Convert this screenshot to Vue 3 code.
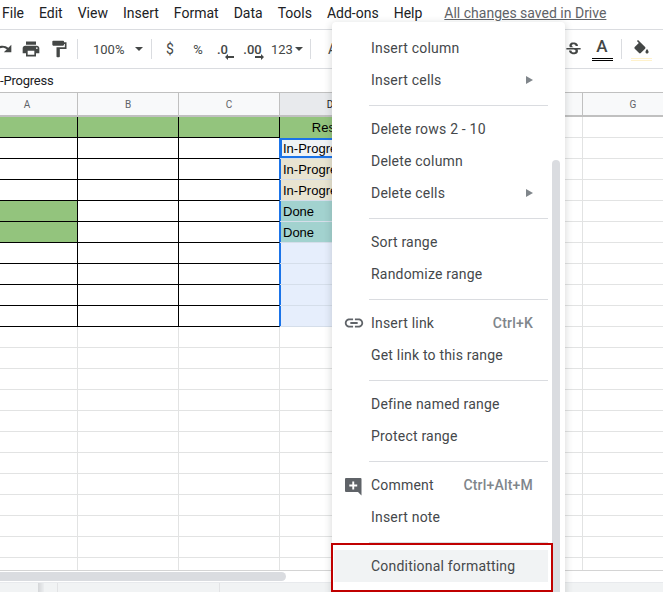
<script setup>
const menus = ['File', 'Edit', 'View', 'Insert', 'Format', 'Data', 'Tools', 'Add-ons', 'Help']
const columns = ['A', 'B', 'C', 'D', 'E', 'F', 'G']

const rows = []
for (let r = 1; r <= 22; r++) {
  const cells = columns.map((c) => ({ key: c, text: '', cls: [] }))
  if (r <= 10) {
    for (let i = 0; i < 3; i++) cells[i].cls.push('boxed')
  }
  if (r === 1) {
    for (let i = 0; i < 3; i++) cells[i].cls.push('green')
    cells[3].cls.push('green', 'head')
    cells[3].text = 'Results'
  }
  if (r === 5 || r === 6) cells[0].cls.push('green')
  if (r >= 2 && r <= 10) {
    cells[2].cls.push('before-sel')
    cells[3].cls.push('sel')
  }
  if (r >= 2 && r <= 4) {
    cells[3].text = 'In-Progress'
    cells[3].cls.push('cream')
  }
  if (r === 5 || r === 6) {
    cells[3].text = 'Done'
    cells[3].cls.push('teal')
  }
  if (r === 2) cells[3].cls.push('active')
  rows.push({ id: r, cells })
}

const sections = [
  [{ label: 'Insert column' }, { label: 'Insert cells', arrow: true }],
  [{ label: 'Delete rows 2 - 10' }, { label: 'Delete column' }, { label: 'Delete cells', arrow: true }],
  [{ label: 'Sort range' }, { label: 'Randomize range' }],
  [{ label: 'Insert link', icon: 'link', keys: 'Ctrl+K' }, { label: 'Get link to this range' }],
  [{ label: 'Define named range' }, { label: 'Protect range' }],
  [{ label: 'Comment', icon: 'comment', keys: 'Ctrl+Alt+M' }, { label: 'Insert note' }],
  [{ label: 'Conditional formatting', hover: true }]
]
</script>

<template>
  <div class="page">
    <div class="menubar">
      <span v-for="m in menus" :key="m" class="menu-name">{{ m }}</span>
      <span class="saved">All changes saved in Drive</span>
    </div>

    <div class="toolbar">
      <span class="tool first">
        <svg width="20" height="20" viewBox="0 0 24 24"><path fill="#444746" d="M18.4 10.6C16.55 8.99 14.15 8 11.5 8c-4.65 0-8.58 3.03-9.96 7.22L3.9 16c1.05-3.19 4.05-5.5 7.6-5.5 1.95 0 3.73.72 5.12 1.88L13 16h9V7l-3.6 3.6z"/></svg>
      </span>
      <span class="tool">
        <svg width="20" height="20" viewBox="0 0 24 24"><path fill="#444746" d="M19 8H5c-1.66 0-3 1.34-3 3v6h4v4h12v-4h4v-6c0-1.66-1.34-3-3-3zm-3 11H8v-5h8v5zm3-7c-.55 0-1-.45-1-1s.45-1 1-1 1 .45 1 1-.45 1-1 1zm-1-9H6v4h12V3z"/></svg>
      </span>
      <span class="tool">
        <svg width="20" height="20" viewBox="0 0 24 24"><path fill="#444746" d="M18 4V3c0-.55-.45-1-1-1H5c-.55 0-1 .45-1 1v4c0 .55.45 1 1 1h12c.55 0 1-.45 1-1V6h1v4H9v11c0 .55.45 1 1 1h2c.55 0 1-.45 1-1v-9h8V4h-3z"/></svg>
      </span>
      <span class="divider d1"></span>
      <span class="zoom-box"><span class="zoom-val">100%</span><span class="caret"></span></span>
      <span class="divider"></span>
      <span class="tool txt dollar">$</span>
      <span class="tool txt percent">%</span>
      <span class="tool txt dec">
        <span>.0</span>
        <svg class="dec-arrow" width="9" height="6" viewBox="0 0 9 6"><path fill="#444746" d="M3 0v2h6v2H3v2L0 3z"/></svg>
      </span>
      <span class="tool txt dec dec2">
        <span>.00</span>
        <svg class="dec-arrow right" width="9" height="6" viewBox="0 0 9 6"><path fill="#444746" d="M6 0v2H0v2h6v2l3-3z"/></svg>
      </span>
      <span class="numfmt">123<span class="caret small"></span></span>
      <span class="divider d2"></span>
      <span class="font-a">A</span>
      <span class="tool strike">
        <svg width="19" height="19" viewBox="0 0 24 24"><path fill="#444746" d="M7.24 8.75c-.26-.48-.39-1.03-.39-1.67 0-.61.13-1.16.4-1.67.26-.5.63-.93 1.11-1.29.48-.35 1.05-.63 1.7-.83.66-.19 1.39-.29 2.18-.29.81 0 1.54.11 2.21.34.66.22 1.23.54 1.69.94.47.4.83.88 1.08 1.43.25.55.38 1.15.38 1.81h-3.01c0-.31-.05-.59-.15-.85-.09-.27-.24-.49-.44-.68-.2-.19-.45-.33-.75-.44-.3-.1-.66-.16-1.06-.16-.39 0-.74.04-1.03.13-.29.09-.53.21-.72.36-.19.16-.34.34-.44.55-.1.21-.15.43-.15.66 0 .48.25.88.74 1.21.38.25.77.48 1.41.7H7.39c-.05-.08-.11-.17-.15-.25zM21 12v-2H3v2h9.62c.18.07.4.14.55.2.37.17.66.34.87.51.21.17.35.36.43.57.07.2.11.43.11.69 0 .23-.05.45-.14.66-.09.2-.23.38-.42.53-.19.15-.42.26-.71.35-.29.08-.63.13-1.01.13-.43 0-.83-.04-1.18-.13s-.66-.23-.91-.42c-.25-.19-.45-.44-.59-.75-.14-.31-.25-.76-.25-1.21H6.4c0 .55.08 1.13.24 1.58.16.45.37.85.65 1.21.28.35.6.66.98.92.37.26.78.48 1.22.65.44.17.9.3 1.38.39.48.08.96.13 1.44.13.8 0 1.53-.09 2.18-.28s1.21-.45 1.67-.79c.46-.34.82-.77 1.07-1.27s.38-1.07.38-1.71c0-.6-.1-1.14-.31-1.61-.05-.11-.11-.23-.17-.33H21z"/></svg>
      </span>
      <span class="text-color"><span class="tc-a">A</span><span class="tc-bar"></span></span>
      <span class="divider d3"></span>
      <span class="fill-color">
        <svg width="19" height="19" viewBox="0 0 24 24"><path fill="#444746" d="M16.56 8.94L7.62 0 6.21 1.41l2.38 2.38-5.15 5.15c-.59.59-.59 1.54 0 2.12l5.5 5.5c.29.29.68.44 1.06.44s.77-.15 1.06-.44l5.5-5.5c.59-.58.59-1.53 0-2.12zM19 11.5s-2 2.17-2 3.5c0 1.1.9 2 2 2s2-.9 2-2c0-1.33-2-3.5-2-3.5z"/></svg>
        <span class="fc-bar"></span>
      </span>
    </div>

    <div class="formula">-Progress</div>

    <div class="col-heads">
      <div v-for="c in columns" :key="c" class="col-head" :class="{ current: c === 'D' }">{{ c }}</div>
    </div>

    <div class="grid">
      <div v-for="row in rows" :key="row.id" class="row">
        <div v-for="cell in row.cells" :key="cell.key" class="cell" :class="cell.cls">{{ cell.text }}</div>
      </div>
    </div>

    <div class="hscroll"><div class="thumb"></div></div>
    <div class="tabs">
      <span class="tab-shadow"></span>
      <span class="tab-line"></span>
      <span class="tab-line second"></span>
    </div>

    <div class="ctx-menu">
      <div class="ctx-scroll"></div>
      <template v-for="(section, s) in sections" :key="s">
        <div v-if="s > 0" class="sep"></div>
        <div v-for="item in section" :key="item.label" class="item" :class="{ hover: item.hover }">
          <span class="item-icon">
            <svg v-if="item.icon === 'link'" width="22" height="22" viewBox="0 0 24 24"><path fill="#5f6368" d="M3.9 12c0-1.71 1.39-3.1 3.1-3.1h4V7H7c-2.76 0-5 2.24-5 5s2.24 5 5 5h4v-1.9H7c-1.71 0-3.1-1.39-3.1-3.1zM8 13h8v-2H8v2zm9-6h-4v1.9h4c1.71 0 3.1 1.39 3.1 3.1s-1.39 3.1-3.1 3.1h-4V17h4c2.76 0 5-2.24 5-5s-2.24-5-5-5z"/></svg>
            <svg v-if="item.icon === 'comment'" class="comment-icon" width="20" height="20" viewBox="0 0 20 20"><path fill="#5f6368" d="M2 1h14.500a1 1 0 0 1 1 1v16.500l-3.500-3.500H2a1 1 0 0 1-1-1V2a1 1 0 0 1 1-1z"/><path fill="#fff" d="M8.300 4.500h1.900v3h3v1.900h-3v3H8.300v-3h-3V7.500h3z"/></svg>
          </span>
          <span class="item-label">{{ item.label }}</span>
          <span v-if="item.keys" class="item-keys">{{ item.keys }}</span>
          <span v-if="item.arrow" class="item-arrow"></span>
        </div>
      </template>
    </div>

    <div class="red-box"></div>
  </div>
</template>

<style>
html, body { margin: 0; background: #fff; }
</style>

<style scoped>
.page {
  position: relative;
  width: 663px;
  height: 592px;
  overflow: hidden;
  background: #fff;
  font-family: Roboto, "Liberation Sans", sans-serif;
  color: #3c4043;
}

.menubar {
  display: flex;
  align-items: center;
  height: 26px;
  padding: 0 0 3px 2px;
  border-bottom: 1px solid #dadce0;
  font-size: 14px;
  gap: 15px;
  white-space: nowrap;
}
.menu-name { color: #202124; }
.saved {
  margin-left: 7px;
  color: #5f6368;
  text-decoration: underline;
}

.toolbar {
  display: flex;
  align-items: center;
  height: 38px;
  border-bottom: 1px solid #dadce0;
  white-space: nowrap;
}
.tool {
  position: relative;
  flex: none;
  width: 28px;
  height: 28px;
  display: flex;
  align-items: center;
  justify-content: center;
}
.tool.first { margin-left: -11px; }
.divider {
  flex: none;
  width: 1px;
  height: 20px;
  background: #dadce0;
  margin-left: 5px;
}
.divider.d1 { margin-left: 4px; }
.divider.d2 { margin-left: 8px; }
.divider.d3 { margin-left: 4px; }
.zoom-box {
  flex: none;
  width: 68px;
  box-sizing: border-box;
  padding-left: 15px;
  display: flex;
  align-items: center;
  font-size: 13px;
  color: #444746;
}
.zoom-val { width: 42px; }
.caret {
  width: 0;
  height: 0;
  border-left: 4px solid transparent;
  border-right: 4px solid transparent;
  border-top: 4px solid #444746;
}
.caret.small { margin-left: 2px; }
.txt {
  font-size: 13px;
  color: #444746;
}
.dollar { margin-left: 4px; font-size: 14px; }
.dec { font-weight: 500; box-sizing: border-box; padding-right: 7px; }
.dec-arrow { position: absolute; left: 13px; top: 19px; }
.dec-arrow.right { left: 14.5px; }
.dec2 { width: 31px; padding-right: 6px; }
.numfmt {
  flex: none;
  width: 31px;
  display: flex;
  align-items: center;
  font-size: 13px;
  color: #444746;
}
.font-a {
  flex: none;
  margin-left: 17px;
  width: 236px;
  font-size: 14px;
  color: #444746;
}
.strike { margin-left: -5px; }
.text-color {
  flex: none;
  width: 30px;
  display: flex;
  flex-direction: column;
  align-items: center;
}
.tc-a { font-size: 17px; line-height: 17px; font-weight: 500; color: #444746; }
.tc-bar {
  width: 21px;
  height: 1px;
  margin-top: 3px;
  border-top: 1px solid #000;
  border-bottom: 1px solid #000;
}
.fill-color {
  flex: none;
  width: 34px;
  display: flex;
  flex-direction: column;
  align-items: center;
  padding-left: 2px;
}
.fill-color svg { margin: 2px 0 -1px; }
.fc-bar {
  width: 21px;
  height: 1px;
  border-top: 1px solid #fff2cc;
  border-bottom: 1px solid #fff2cc;
}

.formula {
  height: 23px;
  line-height: 23px;
  font-family: Roboto, "Liberation Sans", sans-serif;
  font-size: 13px;
  letter-spacing: -0.2px;
  color: #202124;
  white-space: nowrap;
}

.col-heads {
  display: flex;
  margin-left: -23px;
  height: 22px;
  border-top: 1px solid #c0c0c0;
  border-bottom: 2px solid #c0c0c0;
  background: #f8f9fa;
}
.col-head {
  flex: none;
  width: 101px;
  box-sizing: border-box;
  border-right: 1px solid #c0c0c0;
  font-family: Roboto, "Liberation Sans", sans-serif;
  font-size: 10px;
  line-height: 23px;
  text-align: center;
  color: #5f6368;
}
.col-head.current { background: #e8eaed; color: #202124; }

.grid {
  margin-left: -23px;
  height: 453px;
  overflow: hidden;
  border-bottom: 1px solid #d4d4d4;
  box-sizing: content-box;
}
.row { display: flex; height: 21px; }
.cell {
  position: relative;
  flex: none;
  width: 101px;
  height: 21px;
  box-sizing: border-box;
  border-right: 1px solid #e2e3e3;
  border-bottom: 1px solid #e2e3e3;
  padding: 0 3px;
  font-family: "Liberation Sans", Arial, sans-serif;
  font-size: 13px;
  line-height: 21px;
  color: #000;
  white-space: nowrap;
  overflow: hidden;
}
.cell.boxed { border-color: #000; }
.cell.before-sel { border-right-color: #1a73e8; }
.cell.green { background: #93c47d; }
.cell.head { text-align: center; border-color: #93c47d; padding-left: 10px; }
.cell.sel { background: #e6eefc; box-shadow: inset 1px 0 0 #1a73e8; border-bottom-color: #d5deea; }
.cell.cream { background: #e8e4d1; }
.cell.teal { background: #a2d2cf; }
.cell.active { background: #eff3f5; box-shadow: inset 0 0 0 2px #1a73e8; }

.hscroll {
  height: 11px;
  padding-top: 1px;
  box-sizing: border-box;
}
.thumb {
  width: 286px;
  height: 9px;
  background: #dadce0;
  border-radius: 0 5px 5px 0;
}
.tabs {
  position: relative;
  display: flex;
  height: 10px;
  background: #f1f3f4;
  border-top: 1px solid #e8eaed;
}
.tab-shadow {
  width: 6px;
  margin-left: 38px;
  background: linear-gradient(90deg, #d4d6d8, #eceef0);
}
.tab-line {
  width: 1px;
  margin-left: 13px;
  background: #e2e3e5;
}
.tab-line.second { margin-left: 161px; }

.ctx-menu {
  position: absolute;
  left: 332px;
  top: 22px;
  width: 233px;
  height: 590px;
  box-sizing: border-box;
  padding: 10px 17px 0 2px;
  background: #fff;
  border-radius: 4px 4px 0 0;
  box-shadow: 0 2px 6px 2px rgba(60, 64, 67, 0.15);
}
.ctx-scroll {
  position: absolute;
  right: 5px;
  top: 138px;
  width: 8px;
  height: 460px;
  background: #dadce0;
  border-radius: 4px 4px 0 0;
}
.item {
  display: flex;
  align-items: center;
  height: 32px;
  font-size: 14px;
  letter-spacing: 0.2px;
  color: #45484b;
  white-space: nowrap;
}
.item.hover { background: #f1f3f4; }
.item-icon {
  flex: none;
  width: 37px;
  display: flex;
  justify-content: center;
  box-sizing: border-box;
  padding-left: 3px;
}
.comment-icon { margin-top: 3px; }
.item-label { flex: 1; }
.item-keys {
  font-weight: 500;
  color: #80868b;
  margin-right: 15px;
}
.item-arrow {
  width: 0;
  height: 0;
  margin-right: 15px;
  border-top: 4px solid transparent;
  border-bottom: 4px solid transparent;
  border-left: 7px solid #80868b;
}
.sep {
  height: 1px;
  margin: 9px 0 7px 35px;
  background: #dadce0;
}
.red-box {
  position: absolute;
  left: 331px;
  top: 543px;
  width: 222px;
  height: 49px;
  box-sizing: border-box;
  border: 2px solid #c00000;
}
</style>
